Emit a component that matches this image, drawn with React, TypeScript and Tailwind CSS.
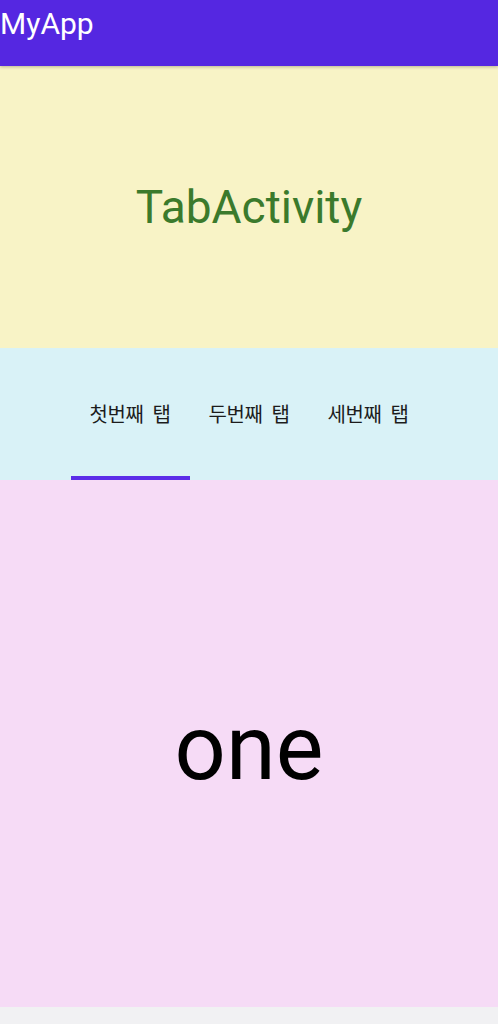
import { useState } from "react"

const tabs = ["첫번째 탭", "두번째 탭", "세번째 탭"]
const pages = ["one", "two", "three"]

export default function App() {
  const [active, setActive] = useState(0)

  return (
    <div className="flex h-[1024px] w-full flex-col bg-[#f1f1f3] font-['Roboto','Noto_Sans_CJK_KR',sans-serif]">
      <header className="relative z-10 h-[66px] shrink-0 bg-[#5527e1] pt-[9px] shadow-[0_1px_3px_rgba(0,0,0,0.25)]">
        <h1 className="text-[30px] leading-none text-white">MyApp</h1>
      </header>

      <section className="flex h-[282px] shrink-0 items-center justify-center bg-[#f8f3c6]">
        <p className="text-[46px] leading-normal text-[#3b7a2c]">TabActivity</p>
      </section>

      <nav className="flex h-[132px] shrink-0 justify-center bg-[#d9f2f7]">
        {tabs.map((t, i) => (
          <button
            key={t}
            onClick={() => setActive(i)}
            className="relative flex w-[119px] items-center justify-center font-['Noto_Sans_CJK_KR',sans-serif] text-[20px] tracking-[-0.02em] text-[#1c1c1c] [word-spacing:5px]"
          >
            {t}
            {active === i && <span className="absolute bottom-0 left-0 h-[4px] w-full bg-[#5b2de8]" />}
          </button>
        ))}
      </nav>

      <main className="flex h-[527px] shrink-0 items-center justify-center bg-[#f6dbf6] pt-[10px]">
        <p className="text-[90px] leading-none text-black">{pages[active]}</p>
      </main>
    </div>
  )
}
